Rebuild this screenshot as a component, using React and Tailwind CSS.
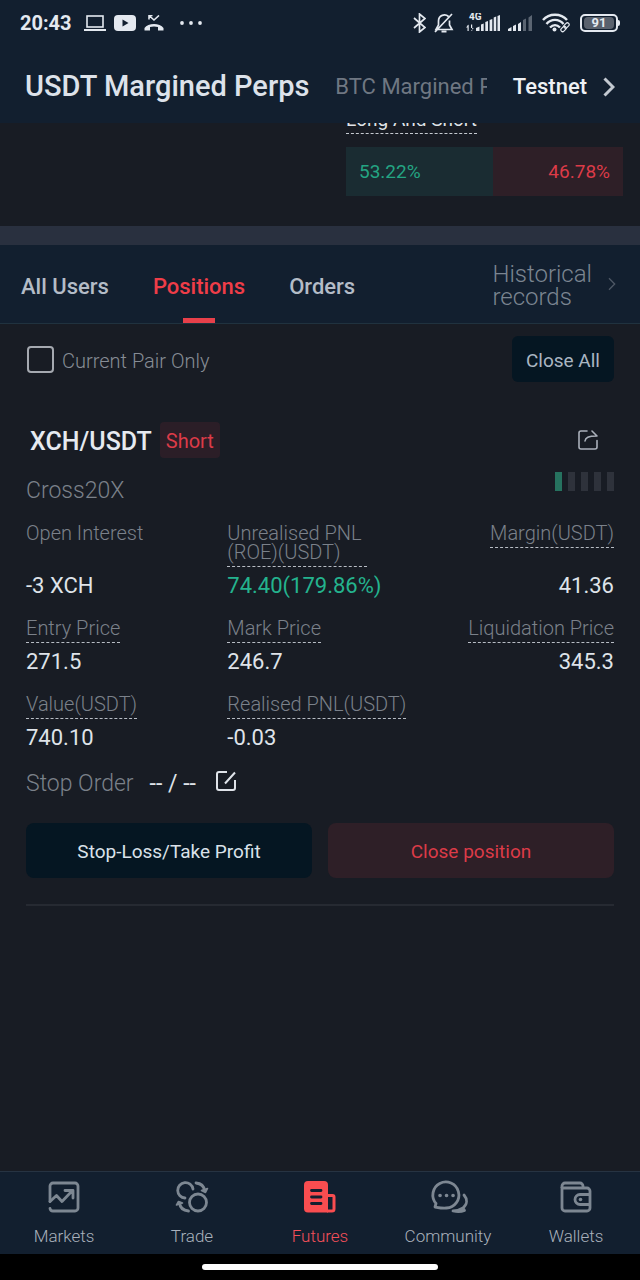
import React, { useState } from 'react';

// Status bar
function StatusBar() {
  return (
    <div className="flex h-[46px] items-center justify-between px-5 text-[#e4e9f0]">
      <div className="flex items-center gap-2">
        <span className="mr-1 text-xl font-bold">20:43</span>
        <svg className="h-4 w-[22px]" viewBox="0 0 22 16" fill="none" stroke="currentColor" strokeWidth="1.6">
          <rect x="3" y="1" width="16" height="11" />
          <path d="M0 15h22" strokeWidth="2" />
        </svg>
        <svg className="h-4 w-[22px]" viewBox="0 0 22 16">
          <rect width="22" height="16" rx="4" fill="currentColor" />
          <path d="M8.5 4.5v7l6-3.5z" fill="#121f2f" />
        </svg>
        <svg className="h-4 w-5" viewBox="0 0 20 16" fill="none" stroke="currentColor">
          <path d="M5 0.5l5 4.5L15 0.500M5 4.500V0.500h3.500" strokeWidth="1.6" />
          <path
            d="M0.5 13C4 7.5 16 7.5 19.5 13V15.500H14V12C11.5 11.2 8.5 11.2 6 12V15.500H0.5z"
            fill="currentColor"
            stroke="none"
          />
        </svg>
        <svg className="ml-2 h-1 w-[22px]" viewBox="0 0 22 4" fill="currentColor">
          <circle cx="2" cy="2" r="1.9" />
          <circle cx="11" cy="2" r="1.9" />
          <circle cx="20" cy="2" r="1.9" />
        </svg>
      </div>

      <div className="flex items-center">
        <svg className="h-5 w-[13px]" viewBox="0 0 13 20" fill="none" stroke="currentColor" strokeWidth="1.7">
          <path d="M1 5l11 9.5L6.5 19V1L12 5.5L1 15" />
        </svg>
        <svg className="ml-2 h-5 w-5" viewBox="0 0 20 20" fill="none" stroke="currentColor" strokeWidth="1.7">
          <path d="M14.500 3.500C11 0.500 4.500 2 4.500 8V12L2 16.500H18L15.500 12V7.500M1 19L18 1" />
          <path d="M7.500 18.5h5" strokeWidth="2" />
        </svg>
        <svg className="ml-3 h-5 w-[34px]" viewBox="0 0 34 20" fill="currentColor">
          <text x="3" y="7" fontSize="10" fontWeight="700">4G</text>
          <path d="M1.5 18v-6h1.200V18zM0 14.5l2.700-3v3zM5 11.5h1.200v6.500H5zM5 18l2.700-3H5z" />
          <path d="M10 18v-3l3.500-1.500V18zM15 18v-6.500l2.700-1V18zM19.300 18V9l2.700-1v10zM23.600 18V7l2.700-1v12zM27.700 18V4.500l2.500-1V18zM31.500 18V3l2.500-1v16z" />
        </svg>
        <svg className="ml-2 h-5 w-6" viewBox="0 0 24 20" fill="currentColor">
          <path d="M0 18v-2l3.500-2v4zM5 18v-5l3-1.500V18zM10 18v-7l3-2v9z" />
          <path d="M15 18V7l3-1.500V18zM20.5 18V4.500L24 2v16z" opacity="0.35" />
        </svg>
        <svg className="ml-2.5 h-5 w-7" viewBox="0 0 28 20" fill="none" stroke="currentColor" strokeWidth="2.4">
          <path d="M1 7C7 0 19 0 25 7M4.500 11C9 5.500 17 5.500 21.5 11M8 14.5C11 11.5 15 11.5 18 14.5" />
          <circle cx="12.5" cy="16.5" r="2" fill="currentColor" stroke="none" />
          <rect x="-3" y="-1.8" width="6" height="3.6" rx="1.8" transform="translate(21.5 16) rotate(-45)" strokeWidth="1.2" />
          <rect x="-3" y="-1.8" width="6" height="3.6" rx="1.8" transform="translate(24.5 12.5) rotate(-45)" strokeWidth="1.2" />
        </svg>
        <div className="ml-2.5 flex h-[18px] w-[38px] items-center justify-center rounded-[5px] border-2 border-current p-0.5">
          <span className="w-full rounded-sm bg-[#59616d] text-center text-[13px] leading-3 font-bold">91</span>
        </div>
        <span className="h-1.5 w-0.5 rounded-r bg-current"></span>
      </div>
    </div>
  );
}

function Chevron({ className }) {
  return (
    <svg className={className} viewBox="0 0 12 20" fill="none" stroke="currentColor">
      <path d="M1.5 1.5L10 10L1.5 18.5" />
    </svg>
  );
}

function Field({ label, value, plain, align, valueClass = 'text-[#dfe3e9]', labelClass = '' }) {
  return (
    <div className={`flex flex-col justify-between gap-1 ${align === 'right' ? 'items-end' : 'items-start'}`}>
      <dt
        className={`border-b border-dashed pb-1 text-xl leading-[19px] font-light text-[#7b818a] ${
          plain ? 'border-transparent' : 'border-[#b8bdc5]'
        } ${labelClass}`}
      >
        {label}
      </dt>
      <dd className={`pt-px text-[22px] leading-7 whitespace-nowrap ${valueClass}`}>{value}</dd>
    </div>
  );
}

const navItems = [
  {
    name: 'Markets',
    icon: (
      <g fill="none" stroke="currentColor" strokeWidth="2.8" strokeLinecap="round" strokeLinejoin="round">
        <path d="M2 20.5V5a3 3 0 0 1 3-3H27a3 3 0 0 1 3 3V27a3 3 0 0 1-3 3H5a3 3 0 0 1-3-2.500" />
        <path d="M2 20.5L8.500 14.5L14 20.5L24.5 9.500M17 9.500H25V17" />
      </g>
    ),
  },
  {
    name: 'Trade',
    icon: (
      <g fill="none" stroke="currentColor" strokeWidth="2.8" strokeLinecap="round">
        <circle cx="22" cy="21.5" r="8.5" />
        <path d="M9 17A7.700 7.700 0 1 1 17 8" />
        <path d="M20 2C25 2.500 28 5.500 28.5 9.500" />
        <path d="M25.5 9.500L31.5 7.500L29.5 11.5z" strokeWidth="1.6" fill="currentColor" strokeLinejoin="round" />
        <path d="M12.5 30C7.500 29.5 4 26.5 3.500 22" />
        <path d="M6.500 22L0.500 24L2.500 20.5z" strokeWidth="1.6" fill="currentColor" strokeLinejoin="round" />
      </g>
    ),
  },
  {
    name: 'Futures',
    icon: (
      <g>
        <path d="M4 0H20a4 4 0 0 1 4 4V31.500H4a4 4 0 0 1-4-4V4a4 4 0 0 1 4-4z" fill="currentColor" />
        <path d="M7.500 9.500H17M7.500 16H17M7.500 22.5H17" stroke="#121f2f" strokeWidth="2.8" strokeLinecap="round" />
        <path d="M23 14.5H28.500a1.500 1.500 0 0 1 1.500 1.500V28a2 2 0 0 1-2 2H23" fill="none" stroke="currentColor" strokeWidth="3" />
        <path d="M26.5 18V27" stroke="#121f2f" strokeWidth="3" />
      </g>
    ),
  },
  {
    name: 'Community',
    icon: (
      <g fill="none" stroke="currentColor" strokeWidth="2.8" strokeLinecap="round" strokeLinejoin="round">
        <path d="M4 22.500A13 13 0 1 1 14.500 27C10 27.500 6 26.500 3 26L4 22.500" />
        <path d="M32 14C35.500 18 35.5 23 31 27L32.500 29.500C29 31 25 31 21 30C25 30 28 29 31 27" />
        <path d="M8 14.5h.1M14.500 14.5h.1M21 14.5h.1" strokeWidth="3.6" />
      </g>
    ),
  },
  {
    name: 'Wallets',
    icon: (
      <g fill="none" stroke="currentColor" strokeWidth="2.8" strokeLinejoin="round">
        <path d="M2 6V27a3 3 0 0 0 3 3H27a3 3 0 0 0 3-3V10a3 3 0 0 0-3-3H3" />
        <path d="M2 7V5a3 3 0 0 1 3-3H20a3 3 0 0 1 3 3V7" />
        <path d="M30 13.5H20a5 5 0 0 0 0 10H30" />
        <circle cx="20.5" cy="18.5" r="1.8" fill="currentColor" stroke="none" />
      </g>
    ),
  },
];

const tabs = ['All Users', 'Positions', 'Orders'];

function App() {
  const [tab, setTab] = useState('Positions');
  const [pairOnly, setPairOnly] = useState(false);

  return (
    <div className="flex min-h-screen flex-col bg-[#181c24] font-['Roboto',sans-serif]">
      <header className="bg-[#121f2f]">
        <StatusBar />
        <div className="flex h-[77px] items-center px-[25px] pt-1 whitespace-nowrap">
          <h1 className="text-[29px] font-medium text-[#dde2ea]">USDT Margined Perps</h1>
          <a href="#btc" className="ml-[26px] min-w-0 flex-1 overflow-hidden text-[22px] text-[#6f7782]">
            BTC Margined Perps
          </a>
          <a href="#testnet" className="ml-[26px] flex items-center gap-4 text-[22px] font-medium text-[#eef1f5]">
            Testnet
            <Chevron className="h-5 w-3 stroke-3 text-[#c3c9d1]" />
          </a>
        </div>
      </header>

      {/* Long / short ratio, scrolled partly under the header */}
      <section className="flex h-[103px] flex-col items-end justify-end overflow-hidden pr-[17px] pb-[30px]">
        <div className="flex w-[277px] flex-col items-start gap-[13px]">
          <h2 className="border-b border-dashed border-[#c5cad1] pb-[3px] text-[19px] leading-5 text-[#dfe3e9]">
            Long And Short
          </h2>
          <div className="flex h-[49px] w-full items-center text-[19px]">
            <div className="flex h-full items-center bg-[#1a2c32] pt-0.5 pl-[13px] text-[#24a583]" style={{ width: '53.22%' }}>
              53.22%
            </div>
            <div className="flex h-full flex-1 items-center justify-end bg-[#2e1f27] pt-0.5 pr-[13px] text-[#dc3b48]">
              46.78%
            </div>
          </div>
        </div>
      </section>

      <div className="h-[19px] bg-[#29303f]"></div>

      <nav className="flex h-[79px] items-stretch justify-between border-b border-[#20323f] bg-[#121f2f] pr-6 pl-[21px]">
        <div className="flex gap-11">
          {tabs.map((name) => (
            <button
              key={name}
              onClick={() => setTab(name)}
              className={`relative pt-1 text-[22px] font-medium ${tab === name ? 'text-[#ef3d48]' : 'text-[#b4bcc7]'}`}
            >
              {name}
              {tab === name && (
                <span className="absolute bottom-0 left-1/2 h-[5px] w-8 -translate-x-1/2 bg-[#e8404a]"></span>
              )}
            </button>
          ))}
        </div>
        <a href="#history" className="flex items-center gap-4 text-[#7b8591]">
          <span className="pt-1 text-2xl leading-[23px] font-light">
            Historical
            <br />
            records
          </span>
          <Chevron className="h-3.5 w-2 stroke-2 text-[#4e5865]" />
        </a>
      </nav>

      <main className="flex-1 px-[26px] pt-3">
        <div className="flex items-center justify-between">
          <label className="flex items-center gap-2 text-xl font-light text-[#868c95]">
            <input
              type="checkbox"
              checked={pairOnly}
              onChange={(e) => setPairOnly(e.target.checked)}
              className="ml-px size-[27px] appearance-none rounded border-2 border-[#a5a9b0] checked:bg-[#ef3d48]"
            />
            <span className="pt-1">Current Pair Only</span>
          </label>
          <button className="h-[46px] rounded-md bg-[#051622] px-3.5 pt-1 text-[19px] text-[#aab6c2]">Close All</button>
        </div>

        <article className="border-b-2 border-[#262a32] pt-10 pb-[26px]">
          <div className="flex h-9 items-center justify-between">
            <div className="flex items-center gap-2">
              <h3 className="pt-1 pl-1 text-[25px] font-medium text-[#e6eaf0]">XCH/USDT</h3>
              <span className="rounded bg-[#2b1e27] px-1.5 pt-0.5 text-xl leading-[34px] text-[#dc3b48]">Short</span>
            </div>
            <button aria-label="Share" className="mr-4 text-[#aab0ba]">
              <svg className="size-5" viewBox="0 0 20 20" fill="none" stroke="currentColor" strokeWidth="1.6" strokeLinecap="round" strokeLinejoin="round">
                <path d="M9 1H3a2 2 0 0 0-2 2V17a2 2 0 0 0 2 2H17a2 2 0 0 0 2-2V10.5" />
                <path d="M7 11C7.500 7.500 10 6 19 6L14 1" />
              </svg>
            </button>
          </div>

          <div className="mt-3.5 flex h-9 items-start justify-between">
            <span className="pt-px text-[23px] leading-9 font-light text-[#7b818a]">Cross20X</span>
            <div className="flex gap-1.5">
              <span className="h-[19px] w-[7px] bg-[#26725f]"></span>
              <span className="h-[19px] w-[7px] bg-[#2e323b]"></span>
              <span className="h-[19px] w-[7px] bg-[#2e323b]"></span>
              <span className="h-[19px] w-[7px] bg-[#2e323b]"></span>
              <span className="h-[19px] w-[7px] bg-[#2e323b]"></span>
            </div>
          </div>

          <dl className="mt-4 grid grid-cols-3 gap-x-4 gap-y-[19px] whitespace-nowrap">
            <Field label="Open Interest" value="-3 XCH" plain />
            <Field
              label="Unrealised PNL (ROE)(USDT)"
              value="74.40(179.86%)"
              valueClass="text-[#24b38e]"
              labelClass="w-[140px] whitespace-normal"
            />
            <Field label="Margin(USDT)" value="41.36" align="right" />
            <Field label="Entry Price" value="271.5" />
            <Field label="Mark Price" value="246.7" />
            <Field label="Liquidation Price" value="345.3" align="right" />
            <Field label="Value(USDT)" value="740.10" />
            <Field label="Realised PNL(USDT)" value="-0.03" />
          </dl>

          <div className="mt-[17px] flex h-7 items-center text-[23px]">
            <span className="pt-0.5 font-light text-[#7b818a]">Stop Order</span>
            <span className="ml-4 pt-0.5 text-[#dfe3e9]">-- / --</span>
            <button aria-label="Edit stop order" className="ml-5 pb-1 text-[#dfe3e9]">
              <svg className="size-5" viewBox="0 0 20 20" fill="none" stroke="currentColor" strokeWidth="2" strokeLinejoin="round">
                <path d="M11 1H3a2 2 0 0 0-2 2V17a2 2 0 0 0 2 2H17a2 2 0 0 0 2-2V9M9 12.5L19 1.5" />
              </svg>
            </button>
          </div>

          <div className="mt-[26px] grid grid-cols-2 gap-4 text-[19px]">
            <button className="h-[55px] rounded-lg bg-[#051622] pt-1 text-[#dbe2ea]">Stop-Loss/Take Profit</button>
            <button className="h-[55px] rounded-lg bg-[#2e1f27] pt-1 text-[#dc3b48]">Close position</button>
          </div>
        </article>
      </main>

      <footer>
        <nav className="grid h-[83px] grid-cols-5 border-t border-[#263342] bg-[#121f2f]">
          {navItems.map((item) => (
            <a
              key={item.name}
              href={`#${item.name.toLowerCase()}`}
              className={`flex flex-col items-center gap-[11px] pt-[9px] text-[17px] font-light ${
                item.name === 'Futures' ? 'text-[#f4505a]' : 'text-[#a9b1bc]'
              }`}
            >
              <svg
                className={`size-8 overflow-visible ${item.name === 'Futures' ? 'text-[#f94d50]' : 'text-[#7d8792]'}`}
                viewBox="0 0 32 32"
              >
                {item.icon}
              </svg>
              {item.name}
            </a>
          ))}
        </nav>
        <div className="flex h-[26px] items-center justify-center bg-black">
          <span className="h-1.5 w-[37%] rounded-full bg-white"></span>
        </div>
      </footer>
    </div>
  );
}

export default App;
